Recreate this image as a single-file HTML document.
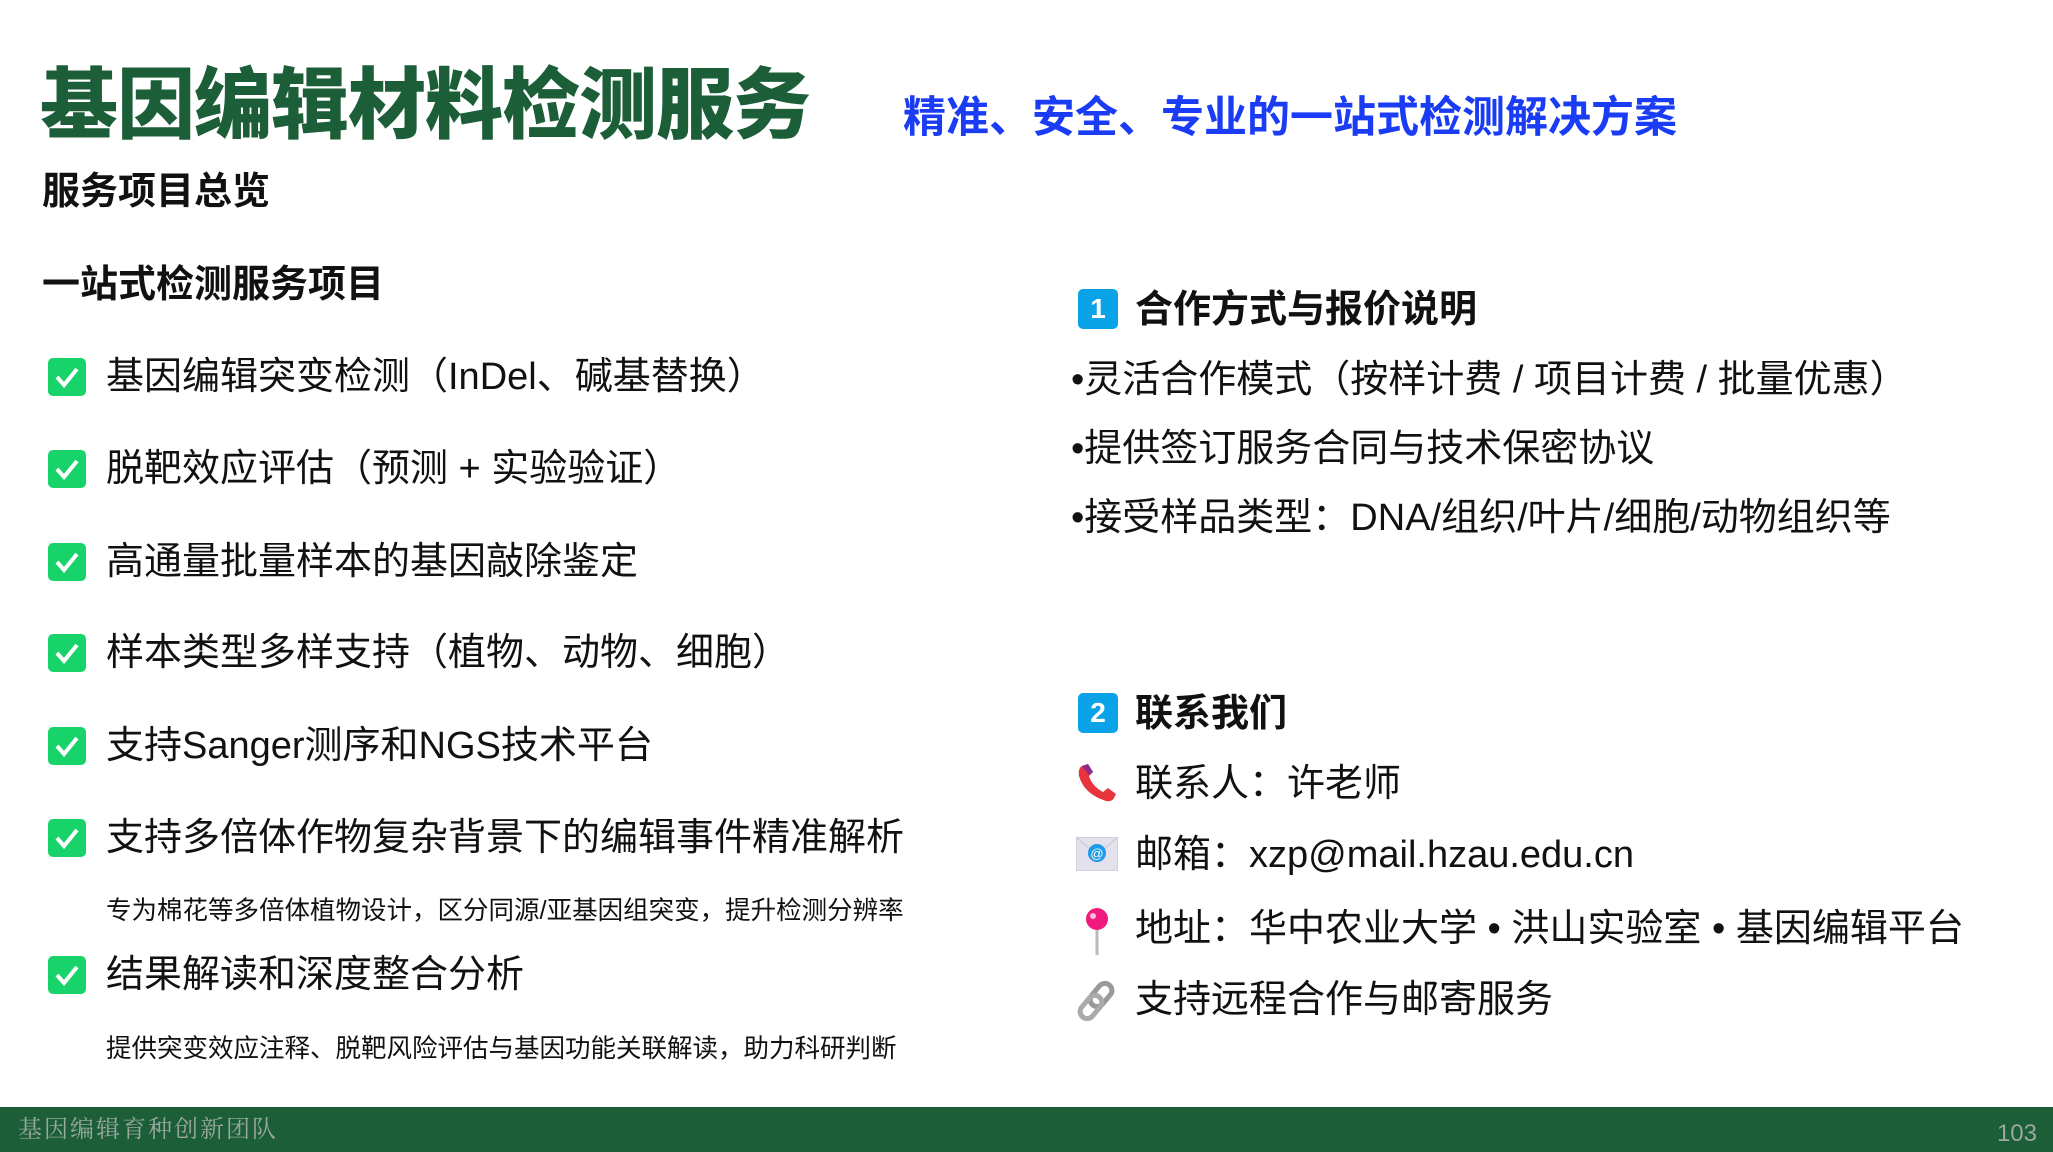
<!DOCTYPE html>
<html><head><meta charset="utf-8"><style>
*{margin:0;padding:0;box-sizing:border-box}
body{width:2053px;height:1152px;background:#fff;position:relative;overflow:hidden;font-family:"Liberation Sans","Noto Sans CJK SC",sans-serif;color:#111}
.a{position:absolute;white-space:nowrap;line-height:1}
.t{left:40px;top:66px;font-size:78px;font-weight:900;color:#1b5e38;letter-spacing:-1px}
.st{left:903px;top:97px;font-size:43px;font-weight:700;color:#1a3cf5}
.h{font-size:38px;font-weight:700}
.cb{position:absolute;width:38px;height:38px;border-radius:5px;background:#18d36a}
.cb svg{position:absolute;left:0;top:0}
.it{font-size:38px;font-weight:400}
.note{font-size:25.5px}
.bd{position:absolute;width:40px;height:40px;border-radius:5px;background:#0aa3e8;color:#fff;font-weight:700;font-size:28px;text-align:center;line-height:40px}
.foot{position:absolute;left:0;top:1107px;width:2053px;height:45px;background:#1b5e38}
</style></head><body>
<div class="a t">基因编辑材料检测服务</div>
<div class="a st">精准、安全、专业的一站式检测解决方案</div>
<div class="a h" style="left:42px;top:173px">服务项目总览</div>
<div class="a h" style="left:42px;top:266px">一站式检测服务项目</div>

<div class="cb" style="left:48px;top:358px"><svg width="38" height="38"><path d="M9 19 L16 27 L29 11" stroke="#fff" stroke-width="4" fill="none"/></svg></div>
<div class="a it" style="left:106px;top:358px">基因编辑突变检测（InDel、碱基替换）</div>
<div class="cb" style="left:48px;top:450px"><svg width="38" height="38"><path d="M9 19 L16 27 L29 11" stroke="#fff" stroke-width="4" fill="none"/></svg></div>
<div class="a it" style="left:106px;top:450px">脱靶效应评估（预测 + 实验验证）</div>
<div class="cb" style="left:48px;top:543px"><svg width="38" height="38"><path d="M9 19 L16 27 L29 11" stroke="#fff" stroke-width="4" fill="none"/></svg></div>
<div class="a it" style="left:106px;top:543px">高通量批量样本的基因敲除鉴定</div>
<div class="cb" style="left:48px;top:634px"><svg width="38" height="38"><path d="M9 19 L16 27 L29 11" stroke="#fff" stroke-width="4" fill="none"/></svg></div>
<div class="a it" style="left:106px;top:634px">样本类型多样支持（植物、动物、细胞）</div>
<div class="cb" style="left:48px;top:727px"><svg width="38" height="38"><path d="M9 19 L16 27 L29 11" stroke="#fff" stroke-width="4" fill="none"/></svg></div>
<div class="a it" style="left:106px;top:727px">支持Sanger测序和NGS技术平台</div>
<div class="cb" style="left:48px;top:819px"><svg width="38" height="38"><path d="M9 19 L16 27 L29 11" stroke="#fff" stroke-width="4" fill="none"/></svg></div>
<div class="a it" style="left:106px;top:819px">支持多倍体作物复杂背景下的编辑事件精准解析</div>
<div class="a note" style="left:106px;top:899px">专为棉花等多倍体植物设计，区分同源/亚基因组突变，提升检测分辨率</div>
<div class="cb" style="left:48px;top:956px"><svg width="38" height="38"><path d="M9 19 L16 27 L29 11" stroke="#fff" stroke-width="4" fill="none"/></svg></div>
<div class="a it" style="left:106px;top:956px">结果解读和深度整合分析</div>
<div class="a note" style="left:106px;top:1037px">提供突变效应注释、脱靶风险评估与基因功能关联解读，助力科研判断</div>

<div class="bd" style="left:1078px;top:289px">1</div>
<div class="a h" style="left:1135px;top:291px">合作方式与报价说明</div>
<div class="a it" style="left:1071px;top:361px">•灵活合作模式（按样计费 / 项目计费 / 批量优惠）</div>
<div class="a it" style="left:1071px;top:430px">•提供签订服务合同与技术保密协议</div>
<div class="a it" style="left:1071px;top:499px">•接受样品类型：DNA/组织/叶片/细胞/动物组织等</div>

<div class="bd" style="left:1078px;top:693px">2</div>
<div class="a h" style="left:1135px;top:695px">联系我们</div>
<svg class="a" style="left:1076px;top:762px" width="42" height="42"><path d="M6 4 Q2 6 3 14 Q8 32 30 39 Q36 40 38 36 L40 32 L32 26 L27 30 Q16 24 13 14 L17 10 L12 2 Z" fill="#e8343c"/><path d="M6 4 L12 2 L17 10 L13 13 Z" fill="#8b2a8a"/></svg>
<div class="a it" style="left:1135px;top:765px">联系人：许老师</div>
<svg class="a" style="left:1076px;top:837px" width="42" height="34"><rect x="0" y="0" width="42" height="34" fill="#e4e0ec" stroke="#c9c2d6"/><path d="M0 0 L21 18 L42 0" stroke="#c9c2d6" fill="none"/><circle cx="21" cy="16" r="9" fill="#1e9be8"/><text x="21" y="21" font-size="13" fill="#fff" text-anchor="middle" font-family="Liberation Sans">@</text></svg>
<div class="a it" style="left:1135px;top:836px">邮箱：xzp@mail.hzau.edu.cn</div>
<svg class="a" style="left:1082px;top:907px" width="30" height="50"><line x1="15" y1="14" x2="15" y2="48" stroke="#bbb" stroke-width="3"/><circle cx="15" cy="12" r="11" fill="#f0197d"/><circle cx="11" cy="9" r="3" fill="#fff" opacity=".7"/></svg>
<div class="a it" style="left:1135px;top:910px">地址：华中农业大学 • 洪山实验室 • 基因编辑平台</div>
<svg class="a" style="left:1076px;top:980px" width="42" height="42"><rect x="18" y="2" width="14" height="26" rx="7" transform="rotate(40 25 15)" fill="none" stroke="#999" stroke-width="5"/><rect x="8" y="14" width="14" height="26" rx="7" transform="rotate(40 15 27)" fill="none" stroke="#aaa" stroke-width="5"/></svg>
<div class="a it" style="left:1135px;top:981px">支持远程合作与邮寄服务</div>

<div class="foot"></div>
<div class="a" style="left:18px;top:1118px;font-size:24px;color:#9aa89f;font-family:'Liberation Serif','Noto Serif CJK SC',serif;letter-spacing:2px">基因编辑育种创新团队</div>
<div class="a" style="right:16px;top:1122px;font-size:24px;color:#9aa89f">103</div>
</body></html>
